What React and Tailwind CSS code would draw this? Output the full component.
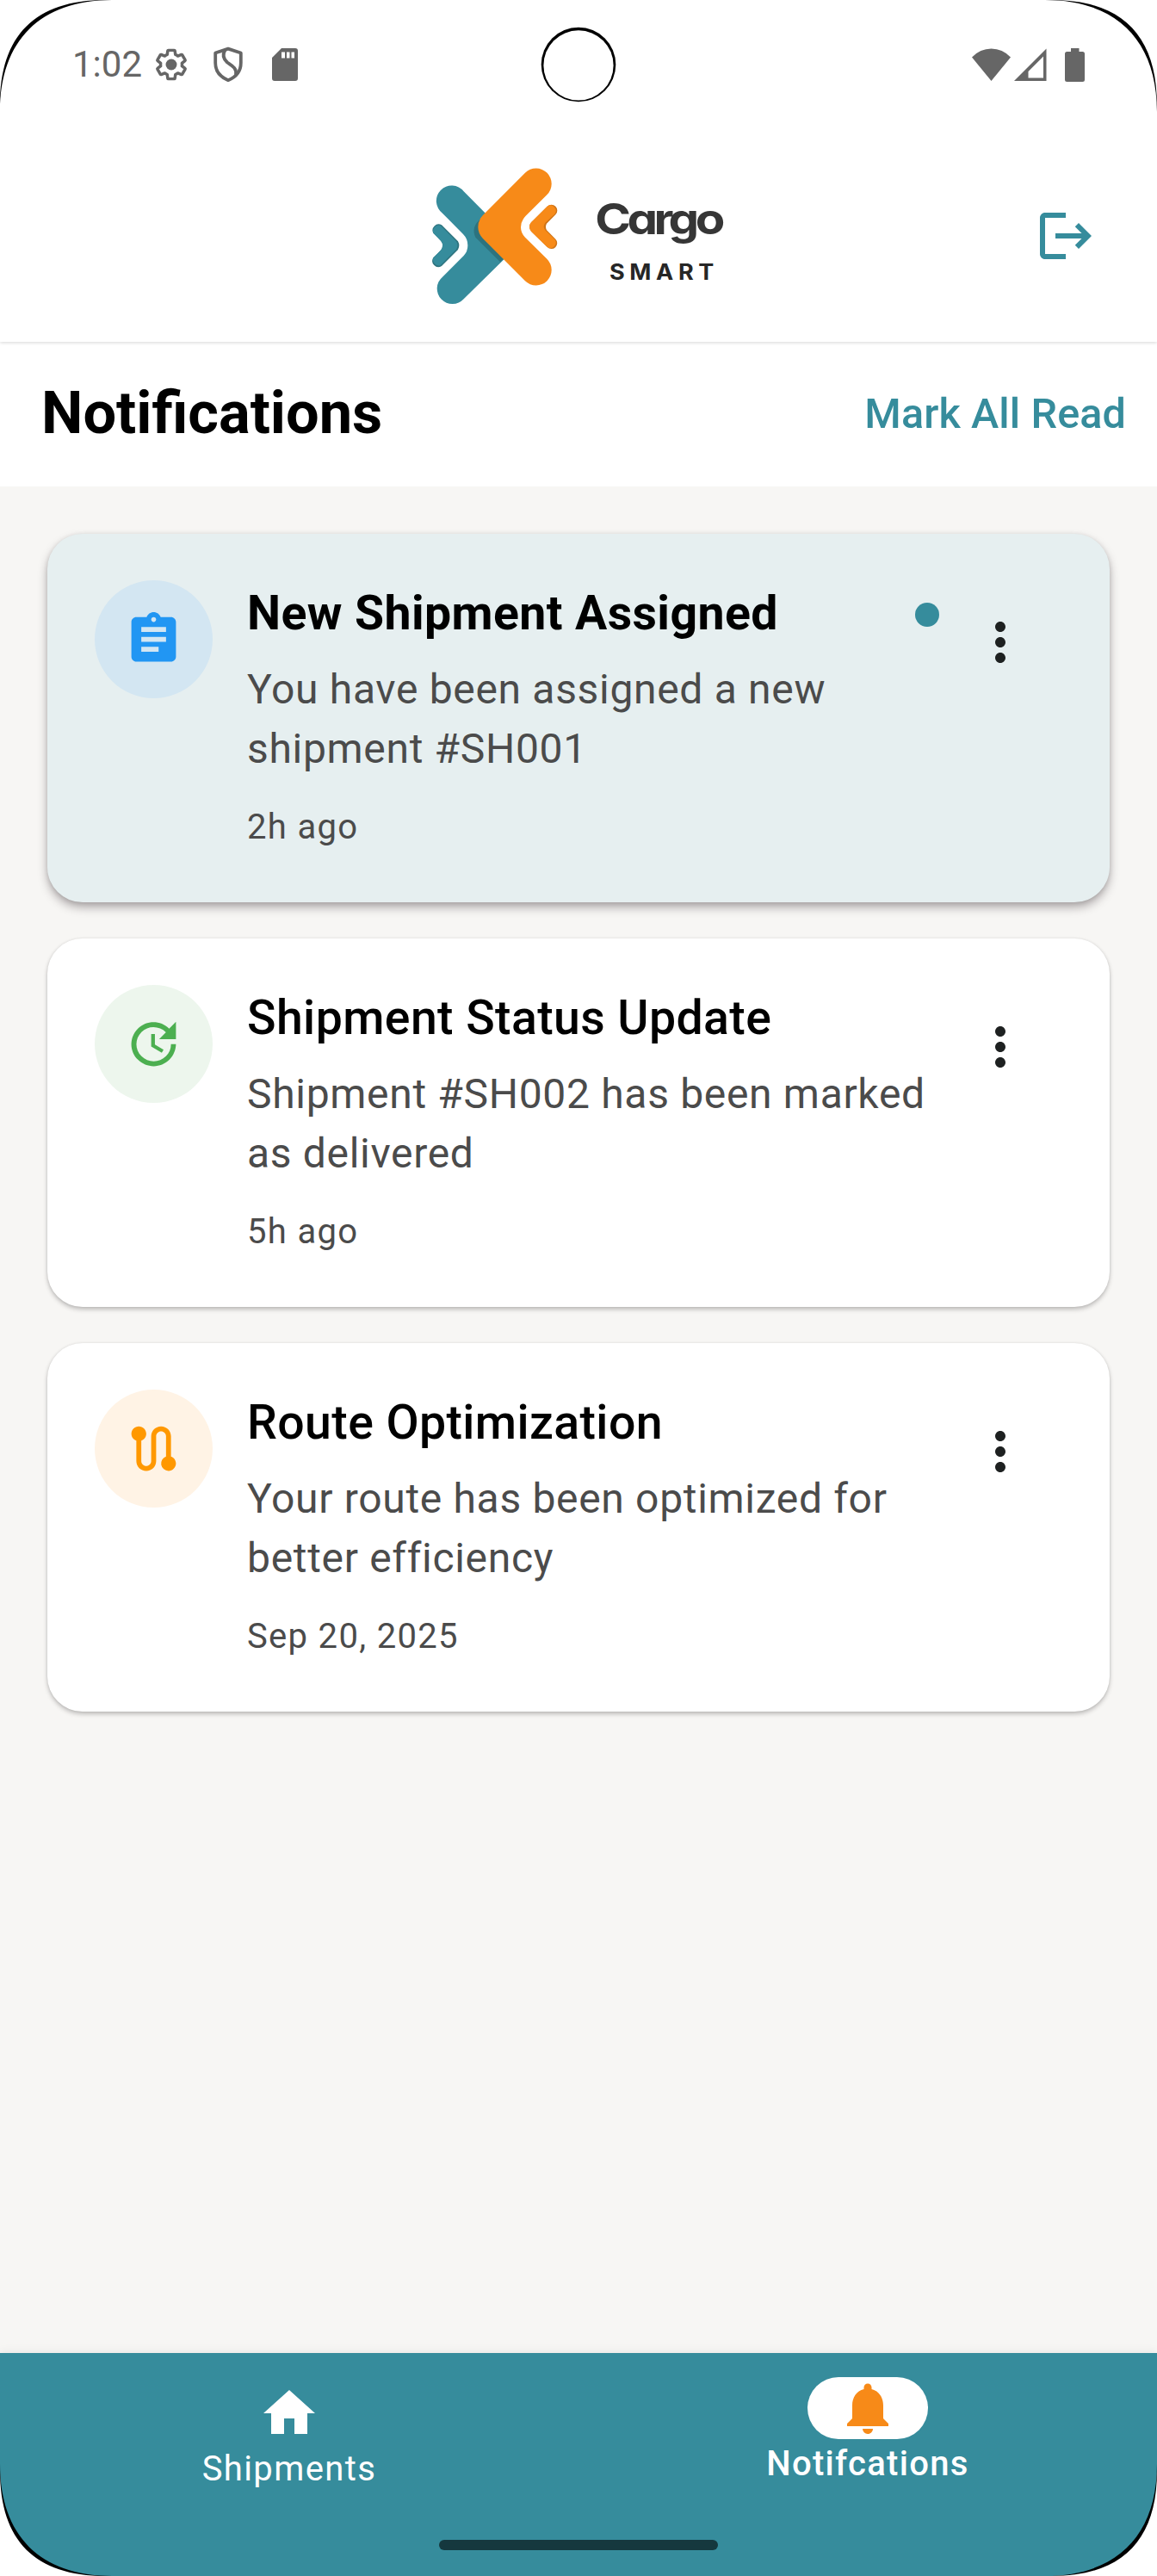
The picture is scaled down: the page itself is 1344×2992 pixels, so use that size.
import React from "react";
import { MdAssignment, MdUpdate, MdRoute, MdMoreVert, MdHome, MdNotifications } from "react-icons/md";

const GEAR =
  "M19.43 12.98c.04-.32.07-.64.07-.98 0-.34-.03-.66-.07-.98l2.11-1.65c.19-.15.24-.42.12-.64l-2-3.46c-.09-.16-.26-.25-.44-.25-.06 0-.12.01-.17.03l-2.49 1c-.52-.4-1.08-.73-1.69-.98l-.38-2.65C14.46 2.18 14.25 2 14 2h-4c-.25 0-.46.18-.49.42l-.38 2.65c-.61.25-1.17.59-1.69.98l-2.49-1c-.06-.02-.12-.03-.18-.03-.17 0-.34.09-.43.25l-2 3.46c-.13.22-.07.49.12.64l2.11 1.65c-.04.32-.07.65-.07.98 0 .33.03.66.07.98l-2.11 1.65c-.19.15-.24.42-.12.64l2 3.46c.09.16.26.25.44.25.06 0 .12-.01.17-.03l2.49-1c.52.4 1.08.73 1.69.98l.38 2.65c.03.24.24.42.49.42h4c.25 0 .46-.18.49-.42l.38-2.65c.61-.25 1.17-.59 1.69-.98l2.49 1c.06.02.12.03.18.03.17 0 .34-.09.43-.25l2-3.46c.12-.22.07-.49-.12-.64l-2.11-1.65z";

function StatusBar() {
  return (
    <div className="relative z-10 flex h-[150px] items-center justify-between bg-white pl-[84px] pr-[84px] text-[#666666]">
      <div className="flex items-center">
        <span className="w-[94px] text-[42px] leading-[50px]">1:02</span>
        <svg className="size-[42px]" viewBox="0 0 24 24" fill="none" stroke="currentColor">
          <path d={GEAR} strokeWidth="2.1" strokeLinejoin="round" transform="translate(.6 .6) scale(.95)" />
          <circle cx="12" cy="12" r="3.7" fill="currentColor" stroke="none" />
        </svg>
        <svg className="ml-[28px] h-[42px] w-[34px]" viewBox="0 0 34 42" fill="none" stroke="currentColor" strokeWidth="3.8" strokeLinejoin="round">
          <path d="M17 2.6L31.800 7.500V19C31.800 28.5 26 35.500 17 39.2C8 35.5 2.200 28.5 2.200 19V7.500Z" />
          <path d="M13.500 4C10.500 9 11 14 16 18.500C21 22 27.500 25 26 33" />
        </svg>
        <svg className="ml-[34px] h-[38px] w-[30px]" viewBox="0 0 30 38" fill="currentColor">
          <path fillRule="evenodd" d="M11 0H27Q30 0 30 3V35Q30 38 27 38H3Q0 38 0 35V11ZM11 4.500V11.500H15V4.500ZM17 4.500V11.500H20.500V4.500ZM22.500 4.500V11.500H26V4.500Z" />
        </svg>
      </div>
      <div className="flex items-center">
        <svg className="h-[38px] w-[45px]" viewBox="0 0 45 38" fill="currentColor">
          <path d="M22.500 38L0 10.500Q9.500 .5 22.500 .5T45 10.500Z" />
        </svg>
        <svg className="ml-[4px] h-[38px] w-[38px]" viewBox="0 0 38 38" fill="currentColor">
          <path fillRule="evenodd" d="M0 38L37.500 .5V38ZM34 9.500L16.500 27V34.500H34Z" />
        </svg>
        <svg className="ml-[21px] h-[39px] w-[23px]" viewBox="0 0 23 39" fill="currentColor">
          <path d="M7 0H16.500V4H20.500Q23 4 23 6.500V36.500Q23 39 20.500 39H2.500Q0 39 0 36.500V6.500Q0 4 2.500 4H7Z" />
        </svg>
      </div>
    </div>
  );
}

function Logo() {
  return (
    <svg className="h-[200px] w-[400px]" viewBox="0 0 1200 600">
      <path
        fill="#368c9c"
        d="M176 157L330 312V380L176 532A53.500 53.500 0 1 1 102 455L176 381Q190 366 190 345Q190 322 174 306L102 233A53.500 53.500 0 1 1 176 157Z"
      />
      <path fill="#2d737e" d="M236 252Q200 280 217 317L303 403L318 388L240 300Z" />
      <path
        fill="#f78a18"
        d="M390 92A53.500 53.500 0 1 1 466 169L392 242Q375 260 375 282Q375 302 390 317L466 392A53.500 53.500 0 1 1 390 469L242 320Q226 302 226 281Q226 258 242 241Z"
      />
      <path fill="#2d737e" d="M70 302L97 330Q108 345 97 361L70 388A21 21 0 0 0 99 417L156 360Q164 345 156 331L99 274A21 21 0 0 0 70 302Z" />
      <path fill="#368c9c" d="M70 302L97 330Q108 345 97 361L70 388A21 21 0 0 0 95 415L150 359Q159 345 150 331L95 275A21 21 0 0 0 70 302Z" />
      <path fill="#cf7417" d="M467 209L411 265Q399 280 411 296L467 351A20 20 0 0 0 496 323L465 292Q459 280 465 269L496 238A20 20 0 0 0 467 209Z" />
      <path fill="#f78a18" d="M467 209L411 265Q399 280 411 296L467 351A19 19 0 0 0 493 324L460 292Q450 280 460 266L493 236A19 19 0 0 0 467 209Z" />
      <text
        transform="translate(634 307) scale(1.13 1)"
        fill="#363636"
        className="font-['Inter',sans-serif] text-[150px] font-bold"
        style={{ fontFeatureSettings: '"cv11"' }}
        textLength="401"
      >
        Cargo
      </text>
      <text
        transform="translate(684 465) scale(1.08 1)"
        fill="#262626"
        className="font-['Inter',sans-serif] text-[75px] font-bold"
        textLength="337"
      >
        SMART
      </text>
    </svg>
  );
}

function Header() {
  return (
    <header className="relative flex h-[247px] items-start justify-between bg-white pt-[20px] pl-[142px] pr-[70px] shadow-[0_1px_4px_rgba(0,0,0,0.16)]">
      <div className="ml-[338px] h-[200px] w-[400px]">
        <Logo />
      </div>
      <svg className="mt-[68px] size-[72px]" viewBox="0 0 24 24" fill="#368c9c">
        <path d="M17 7l-1.41 1.41L18.17 11H8v2h10.17l-2.58 2.58L17 17l5-5zM4 5h8V3H4c-1.1 0-2 .9-2 2v14c0 1.1.9 2 2 2h8v-2H4V5z" />
      </svg>
    </header>
  );
}

const ITEMS = [
  {
    title: "New Shipment Assigned",
    body: "You have been assigned a new shipment #SH001",
    time: "2h ago",
    Icon: MdAssignment,
    unread: true,
    card: "bg-[#e6eff0] shadow-[0_6px_11px_rgba(50,40,45,0.36),0_1px_5px_rgba(50,40,45,0.12)]",
    badge: "bg-[#d3e6f2] text-[#2196f3]",
    weight: "font-bold",
  },
  {
    title: "Shipment Status Update",
    body: "Shipment #SH002 has been marked as delivered",
    time: "5h ago",
    Icon: MdUpdate,
    card: "bg-white shadow-[0_3px_5px_rgba(50,45,48,0.28),0_0_3px_rgba(50,45,48,0.1)]",
    badge: "bg-[#edf6ed] text-[#4caf50]",
    weight: "font-medium",
  },
  {
    title: "Route Optimization",
    body: "Your route has been optimized for better efficiency",
    time: "Sep 20, 2025",
    Icon: MdRoute,
    card: "bg-white shadow-[0_3px_5px_rgba(50,45,48,0.28),0_0_3px_rgba(50,45,48,0.1)]",
    badge: "bg-[#fff3e5] text-[#ff9800]",
    weight: "font-medium",
  },
];

function NotificationCard({ title, body, time, Icon, unread, card, badge, weight }) {
  return (
    <article className={`flex h-[428px] items-start rounded-[41px] px-[55px] pt-[54px] ${card}`}>
      <div className={`flex size-[137px] shrink-0 items-center justify-center rounded-full ${badge}`}>
        <Icon className="size-[69px]" />
      </div>
      <div className="ml-[40px] w-[804px] shrink-0">
        <div className="flex h-[77px] items-center justify-between">
          <h2 className={`text-[55.4px] leading-[77px] tracking-[0.4px] text-black ${weight}`}>{title}</h2>
          {unread && <span className="mt-[2px] size-[28px] rounded-full bg-[#368c9c]" />}
        </div>
        <p className="mt-[15px] text-[48px] leading-[69px] tracking-[0.68px] text-[#4b4b4b]">{body}</p>
        <p className="mt-[30px] text-[40px] leading-[53px] tracking-[1.32px] text-[#4b4b4b]">{time}</p>
      </div>
      <MdMoreVert className="mt-[36px] ml-[35px] size-[72px] shrink-0 text-[#1e2121]" />
    </article>
  );
}

function BottomNav() {
  return (
    <nav className="grid h-[259px] grid-cols-2 bg-[#368c9c] text-[40px] leading-[54px] text-white shadow-[0_-2px_10px_rgba(0,0,0,0.06)]">
      <div className="flex flex-col items-center pt-[34px]">
        <MdHome className="size-[72px]" />
        <span className="mt-[2px] tracking-[1.4px]">Shipments</span>
      </div>
      <div className="flex flex-col items-center pt-[28px]">
        <div className="flex h-[72px] w-[140px] items-center justify-center rounded-full bg-white">
          <MdNotifications className="size-[72px] text-[#f78a18]" />
        </div>
        <span className="mt-[2px] font-medium tracking-[1.3px]">Notifcations</span>
      </div>
    </nav>
  );
}

function Corner({ className }) {
  return (
    <svg className={`pointer-events-none absolute z-20 size-[130px] ${className}`} viewBox="0 0 130 130">
      <path d="M0 0H130C47 0 0 47 0 130Z" fill="#000" />
      <path d="M0 0H122C41 0 0 41 0 122Z" fill="#fff" />
    </svg>
  );
}

export default function App() {
  return (
    <div className="relative flex h-[2992px] w-[1344px] flex-col overflow-hidden bg-[#f7f6f4] font-['Roboto',sans-serif]">
      <StatusBar />
      <div className="flex flex-col-reverse">
        <div className="flex h-[168px] items-center justify-between bg-white pl-[48px] pr-[36px]">
          <h1 className="-mt-[3px] text-[68.57px] leading-[80px] font-bold text-black">Notifications</h1>
          <button className="text-[48.57px] leading-[60px] font-medium tracking-[0.1px] text-[#368c9c]">Mark All Read</button>
        </div>
        <Header />
      </div>
      <main className="flex flex-1 flex-col gap-[42px] px-[55px] pt-[55px]">
        {ITEMS.map((item) => (
          <NotificationCard key={item.title} {...item} />
        ))}
      </main>
      <BottomNav />

      <svg className="absolute top-[31px] left-[628px] z-20 size-[88px]" viewBox="0 0 88 88">
        <circle cx="44" cy="44" r="43.3" fill="#000" />
        <circle cx="44" cy="44.900" r="40.600" fill="#fff" />
      </svg>
      <div className="absolute bottom-[30px] left-[510px] h-[12px] w-[324px] rounded-full bg-[#15383e]" />
      <Corner className="top-0 left-0" />
      <Corner className="top-0 right-0 -scale-x-100" />
      <Corner className="bottom-0 left-0 -scale-y-100" />
      <Corner className="right-0 bottom-0 -scale-100" />
    </div>
  );
}
